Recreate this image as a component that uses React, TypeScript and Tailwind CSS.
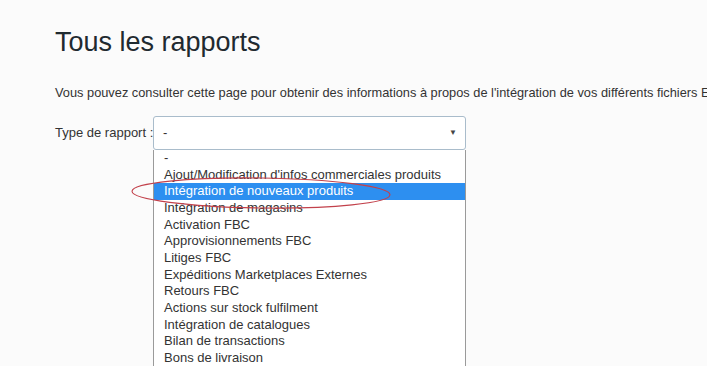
import React from "react";

const items = [
  "-",
  "Ajout/Modification d'infos commerciales produits",
  "Intégration de nouveaux produits",
  "Intégration de magasins",
  "Activation FBC",
  "Approvisionnements FBC",
  "Litiges FBC",
  "Expéditions Marketplaces Externes",
  "Retours FBC",
  "Actions sur stock fulfilment",
  "Intégration de catalogues",
  "Bilan de transactions",
  "Bons de livraison",
];

export default function App() {
  return (
    <div
      className="relative flex h-[366px] w-[722px] overflow-hidden bg-white"
      style={{ fontFamily: '"Liberation Sans", Arial, sans-serif' }}
    >
      <div className="h-full w-[707px] shrink-0 overflow-hidden bg-[#fbfbfb] pl-[55px]">
        <h1 className="mt-[26px] whitespace-nowrap text-[27px] leading-[32px] text-[#1f2a30]">
          Tous les rapports
        </h1>
        <p className="mt-[27px] whitespace-nowrap text-[12.8px] leading-[16px] text-[#333]">
          Vous pouvez consulter cette page pour obtenir des informations à propos de l'intégration de vos différents fichiers Excel
        </p>
        <div className="mt-[15px] flex items-start">
          <div className="w-[98px] whitespace-nowrap pt-[9px] text-[13px] leading-[16px] text-[#333]">Type de rapport :</div>
          <div className="w-[313px]">
            <div className="flex h-[34px] items-center justify-between rounded-[3px] border border-[#a9bccb] bg-white pl-[9px] pr-[8px] text-[13px] text-[#333]">
              <span>-</span>
              <span className="text-[8px] text-[#444]">▼</span>
            </div>
            <div className="border-x border-[#9a9a9a] bg-white">
              {items.map((t, i) => (
                <div
                  key={i}
                  className={
                    i === 2
                      ? "h-[16.67px] whitespace-nowrap bg-[#2d8ff0] pl-[10px] text-[13px] leading-[16.67px] text-white"
                      : "h-[16.67px] whitespace-nowrap pl-[10px] text-[13px] leading-[16.67px] text-[#333]"
                  }
                >
                  {t}
                </div>
              ))}
            </div>
          </div>
        </div>
      </div>
      <svg className="pointer-events-none absolute left-0 top-0" width="722" height="366">
        <ellipse
          cx="261"
          cy="193"
          rx="129"
          ry="15"
          fill="none"
          stroke="#c2414b"
          strokeWidth="1.1"
          transform="rotate(0.8 261 193)"
        />
      </svg>
    </div>
  );
}
